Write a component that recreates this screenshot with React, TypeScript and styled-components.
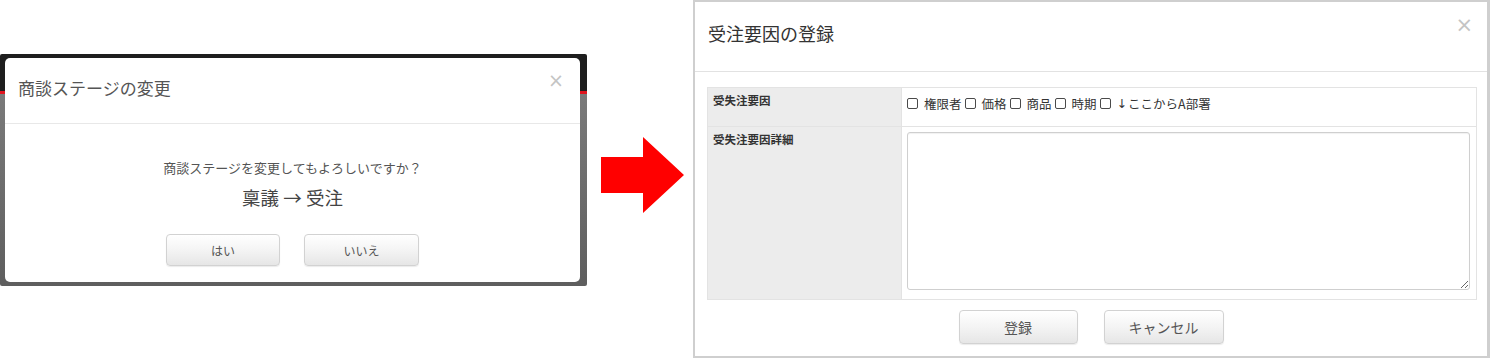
import React from "react";
import styled, { createGlobalStyle } from "styled-components";

const GlobalStyle = createGlobalStyle`
  body {
    margin: 0;
    background: #ffffff;
    font-family: "Noto Sans CJK JP", "Noto Sans", sans-serif;
  }
`;

const Page = styled.div`
  display: flex;
  align-items: flex-start;
  width: 1493px;
  height: 359px;
  overflow: hidden;
`;

// screenshot of the old confirm dialog, with the dark page behind it
const Backdrop = styled.div`
  margin-top: 54px;
  width: 587px;
  height: 232px;
  box-sizing: border-box;
  padding: 4px 7px 4px 5px;
  border-radius: 2px;
  background: linear-gradient(
    to bottom,
    #1e1e1e 0,
    #1e1e1e 37px,
    #e0141e 37px,
    #e0141e 40px,
    #7a7a7a 40px,
    #5e5e5e 100%
  );
`;

const SmallDialog = styled.div`
  display: flex;
  flex-direction: column;
  height: 100%;
  background: #ffffff;
  border-radius: 5px;
`;

const SmallHeader = styled.div`
  display: flex;
  align-items: center;
  justify-content: space-between;
  height: 66px;
  box-sizing: border-box;
  padding: 0 16px 6px 13px;
  border-bottom: 1px solid #e8e8e8;
`;

const SmallTitle = styled.h4`
  margin: 0;
  font-size: 17px;
  font-weight: 400;
  color: #555555;
`;

const Close = styled.span<{ size: number }>`
  font-family: "DejaVu Sans", sans-serif;
  font-size: ${(p) => p.size}px;
  line-height: 1;
  color: #c4c4c4;
  margin-top: -14px;
`;

const SmallBody = styled.div`
  display: flex;
  flex-direction: column;
  align-items: center;
  padding-top: 34px;
`;

const Message = styled.p`
  margin: 0;
  font-size: 13px;
  color: #555555;
`;

const Stage = styled.p`
  margin: 7px 0 0;
  font-size: 18.5px;
  color: #444444;
`;

const ButtonRow = styled.div<{ gap: number; top: number }>`
  display: flex;
  justify-content: center;
  gap: ${(p) => p.gap}px;
  margin-top: ${(p) => p.top}px;
`;

const Button = styled.button<{ w: number; h: number; fs: number }>`
  width: ${(p) => p.w}px;
  height: ${(p) => p.h}px;
  font-family: inherit;
  font-size: ${(p) => p.fs}px;
  color: #555555;
  background: linear-gradient(to bottom, #ffffff 0%, #f4f4f4 50%, #e6e6e6 100%);
  border: 1px solid #d2d2d2;
  border-radius: 4px;
  box-shadow: 0 1px 1px rgba(0, 0, 0, 0.08);
  padding: 0;
`;

const Arrow = styled.svg`
  flex: none;
  margin: 137px 0 0 14px;
`;

// new registration dialog
const Dialog = styled.div`
  display: flex;
  flex-direction: column;
  margin-left: 9px;
  width: 797px;
  height: 358px;
  box-sizing: border-box;
  border: 2px solid #cfcfcf;
  border-right-width: 3px;
  background: #ffffff;
`;

const Header = styled.div`
  display: flex;
  align-items: center;
  justify-content: space-between;
  height: 70px;
  box-sizing: border-box;
  padding: 0 14px 8px 13px;
  border-bottom: 1px solid #e2e2e2;
`;

const Title = styled.h4`
  margin: 0;
  font-size: 18px;
  font-weight: 400;
  color: #333333;
`;

const Body = styled.div`
  padding: 15px 10px 0 12px;
`;

const Table = styled.div`
  display: grid;
  grid-template-columns: 193px 1fr;
  grid-template-rows: 39px 172px;
  border: 1px solid #e3e3e3;
`;

const Label = styled.div<{ last?: boolean }>`
  background: #ececec;
  font-size: 11.5px;
  font-weight: 700;
  color: #333333;
  padding: 4px 5px;
  border-bottom: ${(p) => (p.last ? "none" : "1px solid #e3e3e3")};
`;

const Cell = styled.div<{ last?: boolean }>`
  display: flex;
  align-items: ${(p) => (p.last ? "stretch" : "flex-start")};
  padding: ${(p) => (p.last ? "5px 6px 9px 5px" : "6px 5px 0")};
  border-left: 1px solid #e3e3e3;
  border-bottom: ${(p) => (p.last ? "none" : "1px solid #e3e3e3")};
  font-size: 12.5px;
  color: #333333;
`;

const Check = styled.label`
  display: inline-flex;
  align-items: center;
  margin-right: 3px;
`;

const Box = styled.input`
  appearance: none;
  width: 11px;
  height: 11px;
  margin: 0 6px 0 0;
  border: 1px solid #4a4a4a;
  border-radius: 2px;
  background: #ffffff;
`;

const Down = styled.span`
  font-family: "DejaVu Sans", sans-serif;
  color: #333333;
  margin-right: 1px;
`;

const TextArea = styled.textarea`
  flex: 1;
  box-sizing: border-box;
  border: 1px solid #cfcfcf;
  border-radius: 3px;
  box-shadow: inset 0 1px 1px rgba(0, 0, 0, 0.06);
  resize: both;
  font-family: inherit;
`;

const reasons = ["権限者", "価格", "商品", "時期"];

const App: React.FC = () => {
  return (
    <Page>
      <GlobalStyle />
      <Backdrop>
        <SmallDialog>
          <SmallHeader>
            <SmallTitle>商談ステージの変更</SmallTitle>
            <Close size={19}>×</Close>
          </SmallHeader>
          <SmallBody>
            <Message>商談ステージを変更してもよろしいですか？</Message>
            <Stage>稟議 → 受注</Stage>
          </SmallBody>
          <ButtonRow gap={24} top={24}>
            <Button w={114} h={32} fs={12}>はい</Button>
            <Button w={115} h={32} fs={12}>いいえ</Button>
          </ButtonRow>
        </SmallDialog>
      </Backdrop>

      <Arrow width="83" height="76" viewBox="0 0 83 76">
        <polygon points="0,20 42,20 42,0 83,38 42,76 42,56 0,56" fill="#ff0000" />
      </Arrow>

      <Dialog>
        <Header>
          <Title>受注要因の登録</Title>
          <Close size={21}>×</Close>
        </Header>
        <Body>
          <Table>
            <Label>受失注要因</Label>
            <Cell>
              {reasons.map((r) => (
                <Check key={r}>
                  <Box type="checkbox" />
                  {r}
                </Check>
              ))}
              <Check>
                <Box type="checkbox" />
                <Down>{"\u2193\uFE0E"}</Down>ここからA部署
              </Check>
            </Cell>
            <Label last>受失注要因詳細</Label>
            <Cell last>
              <TextArea />
            </Cell>
          </Table>
        </Body>
        <ButtonRow gap={26} top={10}>
          <Button w={119} h={34} fs={14}>登録</Button>
          <Button w={120} h={34} fs={14}>キャンセル</Button>
        </ButtonRow>
      </Dialog>
    </Page>
  );
};

export default App;
